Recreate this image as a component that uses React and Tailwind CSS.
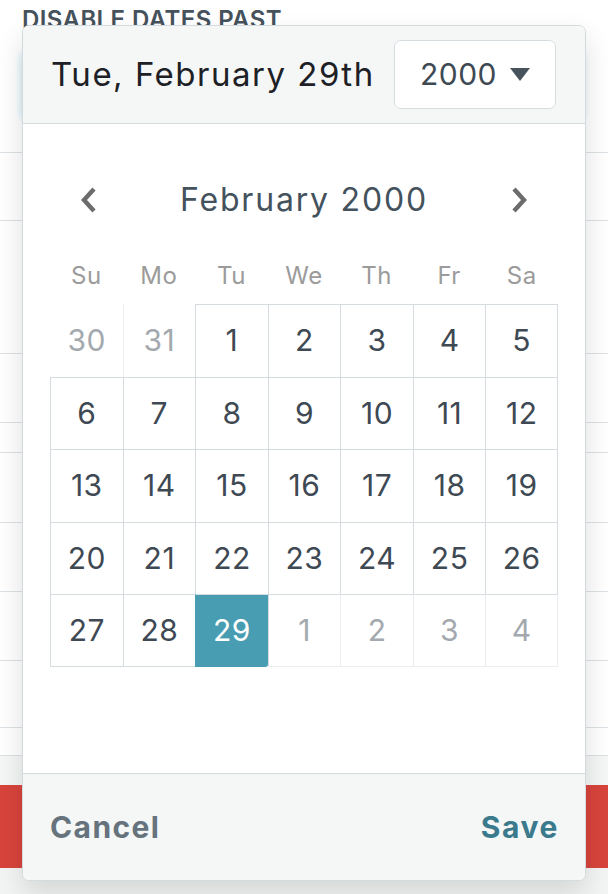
import { useState } from 'react';

// Border classes per side, written in full so Tailwind picks them up
const TOP = {
  dark: 'border-t border-t-[#d5dce0]',
  light: 'border-t border-t-[#eaeef0]',
  none: 'border-t border-t-transparent',
  sel: 'border-t border-t-[#d5dce0]',
};
const LEFT = {
  dark: 'border-l border-l-[#d5dce0]',
  light: 'border-l border-l-[#eaeef0]',
  none: 'border-l border-l-transparent',
  sel: 'border-l border-l-[#489db2]',
};
const RIGHT = {
  dark: 'border-r border-r-[#d5dce0]',
  light: 'border-r border-r-[#eaeef0]',
  sel: 'border-r border-r-[#489db2]',
};
const BOTTOM = {
  dark: 'border-b border-b-[#d5dce0]',
  light: 'border-b border-b-[#eaeef0]',
  sel: 'border-b border-b-[#489db2]',
};

const WEEKDAYS = ['Su', 'Mo', 'Tu', 'We', 'Th', 'Fr', 'Sa'];

// [day, inMonth]
const WEEKS = [
  [[30, false], [31, false], [1, true], [2, true], [3, true], [4, true], [5, true]],
  [[6, true], [7, true], [8, true], [9, true], [10, true], [11, true], [12, true]],
  [[13, true], [14, true], [15, true], [16, true], [17, true], [18, true], [19, true]],
  [[20, true], [21, true], [22, true], [23, true], [24, true], [25, true], [26, true]],
  [[27, true], [28, true], [29, true], [1, false], [2, false], [3, false], [4, false]],
];

// background page rows (right edge peeks out behind the dialog)
const ROWS = ['h-[68px]', 'h-[133px]', 'h-[69px]', 'h-[30px]', 'h-[70px]', 'h-[69px]', 'h-[69px]', 'h-[67px]', 'h-[28px]'];

function ChevronLeft() {
  return (
    <svg width="20" height="28" viewBox="0 0 20 28" fill="none">
      <polyline points="15,3 5,14 15,25" stroke="#6c6c6c" strokeWidth="4.4" />
    </svg>
  );
}

function ChevronRight() {
  return (
    <svg width="20" height="28" viewBox="0 0 20 28" fill="none">
      <polyline points="5,3 15,14 5,25" stroke="#6c6c6c" strokeWidth="4.4" />
    </svg>
  );
}

function DayCell({ day, inMonth, r, c, selected }) {
  const above = r > 0 ? WEEKS[r - 1][c][1] : null;
  const before = c > 0 ? WEEKS[r][c - 1][1] : null;

  let top;
  if (r === 0) top = inMonth ? 'dark' : 'none';
  else top = inMonth || above ? 'dark' : 'light';

  let left;
  if (c === 0) left = inMonth ? 'dark' : 'none';
  else left = inMonth || before ? 'dark' : 'light';

  if (selected) left = 'sel';

  const cls = [
    'flex items-center justify-center h-[72.6px] text-[30px] tracking-[0.5px]',
    TOP[top],
    LEFT[left],
    c === 6 ? RIGHT[inMonth ? 'dark' : 'light'] : '',
    r === 4 ? BOTTOM[selected ? 'sel' : inMonth ? 'dark' : 'light'] : '',
    selected
      ? 'bg-[#489db2] text-white rounded-br-[3px]'
      : inMonth
      ? 'text-[#3e4954]'
      : 'text-[#a3a9ae]',
  ].join(' ');

  return <div className={cls}>{day}</div>;
}

function DatePicker() {
  const [selected] = useState(29);

  return (
    <div className="absolute left-[22px] top-[25px] w-[564px] h-[856px] flex flex-col rounded-[7px] border border-[#d3dbdf] bg-white overflow-hidden shadow-[0_12px_28px_rgba(0,0,0,0.13)]">
      {/* Header */}
      <div className="h-[98px] flex items-center justify-between pl-[28px] pr-[29px] bg-[#f5f7f7] border-b border-[#d3dbdf]">
        <span className="text-[33px] text-[#1d2126] tracking-[1.5px]">Tue, February 29th</span>
        <button className="w-[162px] h-[69px] rounded-[7px] border border-[#d5dde1] bg-white flex items-center justify-center gap-[13px] text-[30px] text-[#3e4953] tracking-[0.5px]">
          2000
          <svg width="20" height="13" viewBox="0 0 20 13">
            <polygon points="0,0 20,0 10,13" fill="#46525c" />
          </svg>
        </button>
      </div>

      {/* Body */}
      <div className="flex-1 flex flex-col bg-white pt-[52px] px-[27px]">
        <div className="h-[48px] flex items-center justify-between px-[29px]">
          <ChevronLeft />
          <span className="text-[32px] text-[#44525d] tracking-[1.8px]">February 2000</span>
          <ChevronRight />
        </div>
        <div className="mt-[24px] h-[56px] grid grid-cols-7 w-[508px] items-center">
          {WEEKDAYS.map((d) => (
            <div key={d} className="text-center text-[24px] text-[#9b9b9b] tracking-[0.5px]">
              {d}
            </div>
          ))}
        </div>
        <div className="grid grid-cols-7 w-[508px]">
          {WEEKS.map((week, r) =>
            week.map(([day, inMonth], c) => (
              <DayCell
                key={`${r}-${c}`}
                day={day}
                inMonth={inMonth}
                r={r}
                c={c}
                selected={inMonth && day === selected}
              />
            ))
          )}
        </div>
      </div>

      {/* Footer */}
      <div className="h-[107px] flex items-center justify-between pl-[27px] pr-[26px] bg-[#f5f7f7] border-t border-[#d3dbdf]">
        <button className="text-[30px] font-bold text-[#66737d] tracking-[1.4px]">Cancel</button>
        <button className="text-[30px] font-bold text-[#3b7a8c] tracking-[1.6px]">Save</button>
      </div>
    </div>
  );
}

export default function App() {
  return (
    <div className="relative w-[608px] h-[894px] overflow-hidden bg-white font-[Inter,sans-serif]">
      {/* Page behind the dialog */}
      <div className="flex flex-col h-full">
        <div className="pl-[22px] pt-[5px] text-[24px] leading-[30px] font-semibold text-[#46525c] tracking-[0.4px]">
          DISABLE DATES PAST
        </div>
        <div className="ml-[23px] mr-[26px] mt-[18px] h-[66px] rounded-[6px] shadow-[0_0_6px_3px_#d6eef8]" />
        <div className="h-[33px]" />
        <div className="border-b border-[#dce2e5]" />
        {ROWS.map((h, i) => (
          <div key={i} className={`${h} border-b border-[#dce2e5]`} />
        ))}
        <div className="h-[29px] bg-[#f5f7f7]" />
        <div className="h-[83px] bg-[#d8443c]" />
        <div className="flex-1 bg-[#f3f5f5]" />
      </div>

      <DatePicker />
    </div>
  );
}
